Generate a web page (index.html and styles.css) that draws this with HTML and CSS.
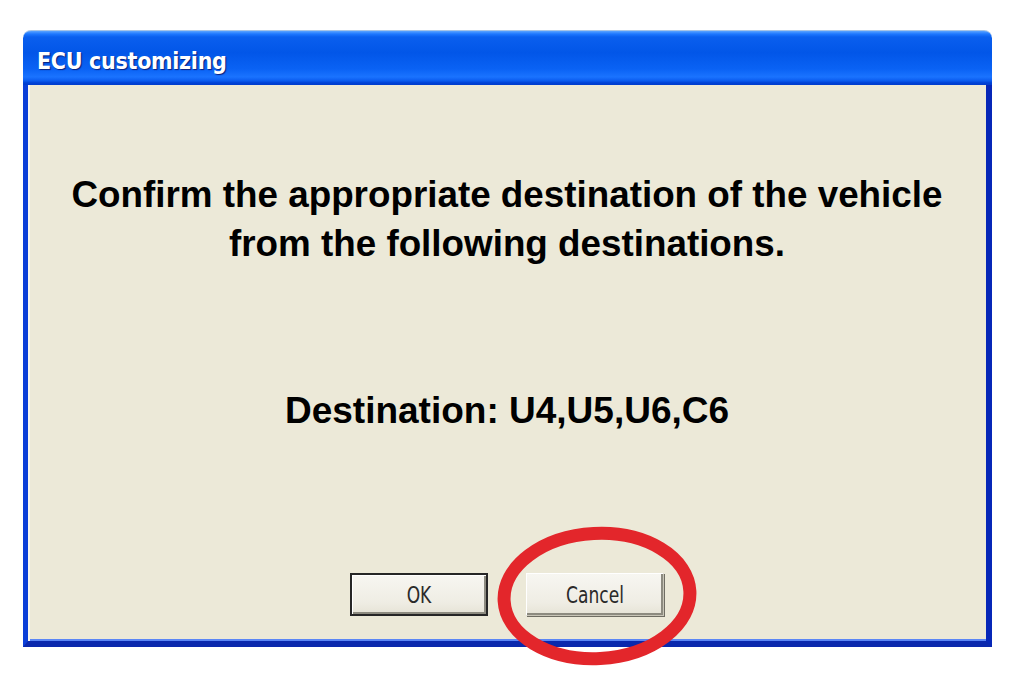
FILE: index.html
```html
<!DOCTYPE html>
<html lang="en">
<head>
    <meta charset="UTF-8">
    <meta name="viewport" content="width=device-width, initial-scale=1.0">
    <title>ECU customizing</title>
    <link rel="stylesheet" href="styles.css">
</head>
<body>
    <div class="page">
        <div class="window">
            <div class="titlebar">
                <span class="title">ECU customizing</span>
            </div>
            <div class="client">
                <p class="message">Confirm the appropriate destination of the vehicle<br>from the following destinations.</p>
                <p class="destination">Destination: U4,U5,U6,C6</p>
                <div class="buttons">
                    <button class="btn btn-default"><span>OK</span></button>
                    <button class="btn"><span>Cancel</span></button>
                </div>
            </div>

            <!-- red marker drawn over the Cancel button -->
            <svg class="marker" width="220" height="160" viewBox="0 0 220 160">
                <ellipse cx="110" cy="80" rx="93" ry="62.5" fill="none" stroke="#e3262b" stroke-width="13" transform="rotate(-3 110 80)"/>
            </svg>
        </div>
    </div>
</body>
</html>
```

FILE: styles.css
```css
html, body {
    height: 100%;
}
body {
    margin: 0;
    background: #ffffff;
    font-family: 'Liberation Sans', Arial, sans-serif;
}
.page {
    min-height: 100%;
    box-sizing: border-box;
    padding: 30px 0 0 23px;
}
.window {
    position: relative;
    width: 969px;
}
.titlebar {
    height: 55px;
    box-sizing: border-box;
    padding: 6px 0 0 14px;
    display: flex;
    align-items: center;
    border-radius: 8px 8px 0 0;
    background: linear-gradient(#5aa3ff 0, #1e78ff 3px, #0a5fee 6px, #0256e8 40%, #0a62f4 70%, #1a73ff 85%, #0b5cef 92%, #0042d6 96%, #003ccd 100%);
    border-top: 1px solid #a7c4e6;
}
.title {
    font-family: 'DejaVu Sans Condensed', 'DejaVu Sans', sans-serif;
    font-weight: bold;
    font-size: 23px;
    letter-spacing: -0.3px;
    color: #ffffff;
    text-shadow: 1px 1px 1px #0a1e7a;
}
.client {
    height: 562px;
    box-sizing: border-box;
    padding-top: 85px;
    background: #ece9d8;
    border-left: 5px solid #0b3fd8;
    border-right: 6px solid #0627b8;
    border-bottom: 6px solid #0a28ad;
    box-shadow: inset 2px 0 0 #f8f6ee, inset 0 -2px 0 #5b86f5;
    text-align: center;
    color: #000000;
}
.message {
    margin: 0;
    font-size: 36.8px;
    font-weight: bold;
    line-height: 49px;
}
.destination {
    margin: 118px 0 0;
    font-size: 37px;
    font-weight: bold;
    line-height: 49px;
}
.buttons {
    margin-top: 138px;
    display: flex;
    justify-content: center;
    gap: 38px;
}
.btn {
    width: 138px;
    height: 43px;
    padding: 0;
    background: linear-gradient(#f7f6f1, #efede4 70%, #e6e3d6);
    border: 1px solid #c9c6b8;
    border-top-color: #ffffff;
    border-left-color: #ffffff;
    box-shadow: inset -2px -2px 0 #8d8b80, 1px 1px 0 #6f6d63;
    font-family: 'DejaVu Sans Condensed', 'DejaVu Sans', sans-serif;
    font-size: 19px;
    color: #2a2a2a;
}
.btn span {
    display: inline-block;
    transform: scaleY(1.2);
}
.btn-default {
    border: 2px solid #262626;
    box-shadow: inset 1px 1px 0 #ffffff, inset -2px -2px 0 #8d8b80;
}
.marker {
    position: absolute;
    left: 464px;
    top: 486px;
}
```
